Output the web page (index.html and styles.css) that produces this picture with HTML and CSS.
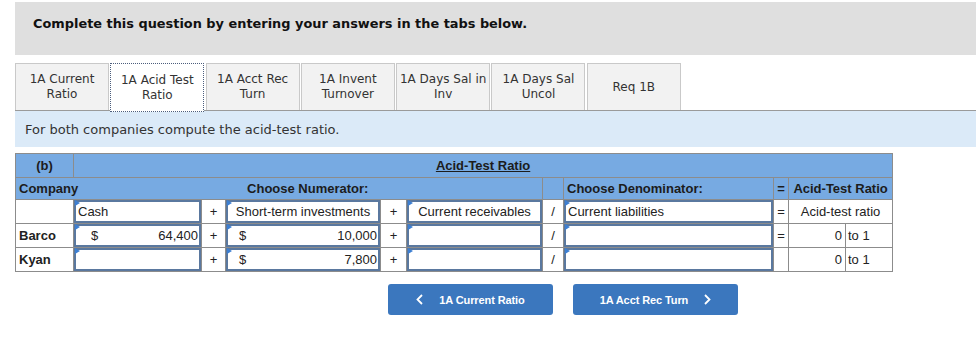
FILE: index.html
```html
<!DOCTYPE html>
<html>
<head>
<meta charset="utf-8">
<link rel="stylesheet" href="styles.css">
</head>
<body>
<div class="banner">Complete this question by entering your answers in the tabs below.</div>

<div class="tabs">
  <div class="tab">1A Current<br>Ratio</div>
  <div class="tab active">1A Acid Test<br>Ratio</div>
  <div class="tab">1A Acct Rec<br>Turn</div>
  <div class="tab">1A Invent<br>Turnover</div>
  <div class="tab">1A Days Sal in<br>Inv</div>
  <div class="tab">1A Days Sal<br>Uncol</div>
  <div class="tab">Req 1B</div>
</div>

<div class="instr">For both companies compute the acid-test ratio.</div>

<table class="grid">
  <colgroup>
    <col class="c-co"><col class="c-cash"><col class="c-op1"><col class="c-sti"><col class="c-op2"><col class="c-rec"><col class="c-div"><col class="c-den"><col class="c-eq"><col class="c-val"><col class="c-unit">
  </colgroup>
  <tr class="hdr h1">
    <td class="center b">(b)</td>
    <td colspan="10" class="center b"><span class="ul">Acid-Test Ratio</span></td>
  </tr>
  <tr class="hdr h2">
    <td class="b co-h">Company</td>
    <td colspan="5" class="center b num-h">Choose Numerator:</td>
    <td></td>
    <td class="b">Choose Denominator:</td>
    <td class="center b">=</td>
    <td colspan="2" class="center b">Acid-Test Ratio</td>
  </tr>
  <tr class="row">
    <td></td>
    <td class="inp"><div class="box left">Cash</div></td>
    <td class="center">+</td>
    <td class="inp"><div class="box centered">Short-term investments</div></td>
    <td class="center">+</td>
    <td class="inp"><div class="box centered">Current receivables</div></td>
    <td class="center">/</td>
    <td class="inp"><div class="box left">Current liabilities</div></td>
    <td class="center">=</td>
    <td colspan="2" class="center">Acid-test ratio</td>
  </tr>
  <tr class="row">
    <td class="b lbl">Barco</td>
    <td class="inp"><div class="box money"><span class="cur">$</span><span>64,400</span></div></td>
    <td class="center">+</td>
    <td class="inp"><div class="box money m2"><span class="cur">$</span><span>10,000</span></div></td>
    <td class="center">+</td>
    <td class="inp"><div class="box"></div></td>
    <td class="center">/</td>
    <td class="inp"><div class="box"></div></td>
    <td class="center">=</td>
    <td class="right">0</td>
    <td class="unit">to 1</td>
  </tr>
  <tr class="row">
    <td class="b lbl">Kyan</td>
    <td class="inp"><div class="box"></div></td>
    <td class="center">+</td>
    <td class="inp"><div class="box money m2"><span class="cur">$</span><span>7,800</span></div></td>
    <td class="center">+</td>
    <td class="inp"><div class="box"></div></td>
    <td class="center">/</td>
    <td class="inp"><div class="box"></div></td>
    <td></td>
    <td class="right">0</td>
    <td class="unit">to 1</td>
  </tr>
</table>

<div class="nav">
  <div class="btn">
    <svg width="7" height="11" viewBox="0 0 7 11"><path d="M6 1 L1.5 5.5 L6 10" fill="none" stroke="#fff" stroke-width="1.8"/></svg>
    <span>1A Current Ratio</span>
  </div>
  <div class="btn">
    <span>1A Acct Rec Turn</span>
    <svg width="7" height="11" viewBox="0 0 7 11"><path d="M1 1 L5.5 5.5 L1 10" fill="none" stroke="#fff" stroke-width="1.8"/></svg>
  </div>
</div>
</body>
</html>
```

FILE: styles.css
```css
body {
  margin: 0;
  padding-top: 2px;
  background: #fff;
  font-family: "DejaVu Sans", Verdana, sans-serif;
  color: #222;
}

.banner {
  margin-left: 15px;
  height: 53px;
  background: #dfdfdf;
  padding-left: 18px;
  box-sizing: border-box;
  padding-top: 14px;
  font-size: 12.9px;
  font-weight: bold;
  color: #111;
}

.tabs {
  margin: 8px 0 0 15px;
  display: flex;
  gap: 1.3px;
  border-bottom: 1px solid #9a9a9a;
  height: 47px;
}

.tab {
  width: 94px;
  box-sizing: border-box;
  height: 47px;
  background: #f2f2f2;
  border: 1px solid #c9c9c9;
  border-bottom: none;
  display: flex;
  align-items: center;
  justify-content: center;
  text-align: center;
  font-size: 12px;
  line-height: 15px;
  color: #333;
}

.tab.active {
  background: #fff;
  border: 1px dotted #4b5d7c;
  height: 49px;
  position: relative;
  z-index: 1;
}

.instr {
  margin-left: 15px;
  height: 36px;
  background: #dbeaf8;
  padding-left: 10px;
  box-sizing: border-box;
  padding-top: 11px;
  font-size: 13px;
  color: #333;
}

.grid {
  margin: 6px 0 0 15px;
  border-collapse: collapse;
  table-layout: fixed;
  width: 877px;
  font-family: "Liberation Sans", Arial, sans-serif;
  font-size: 13px;
  color: #222;
}

.c-co { width: 58px; }
.c-cash { width: 128px; }
.c-op1 { width: 24px; }
.c-sti { width: 155px; }
.c-op2 { width: 26px; }
.c-rec { width: 136px; }
.c-div { width: 21px; }
.c-den { width: 210px; }
.c-eq { width: 15px; }
.c-val { width: 57px; }
.c-unit { width: 47px; }

.grid td {
  border: 1px solid #8c8c8c;
  padding: 0 3px;
  white-space: nowrap;
  overflow: visible;
}

.hdr td {
  background: #77aae2;
  color: #1c1c1c;
}

.h1 td { height: 23px; }
.h2 td { height: 21px; }
.row td { height: 23px; padding-top: 0; padding-bottom: 0; }

.grid .co-h { border-right: none; }
.grid .num-h { border-left: none; }

.b { font-weight: bold; }
.center { text-align: center; }
.right { text-align: right; }
.grid td.unit { padding-left: 2px; }
.ul { text-decoration: underline; }

.grid td.inp {
  padding: 0;
  vertical-align: top;
}

.box {
  position: relative;
  box-sizing: border-box;
  height: 23px;
  border: 2px solid #5a789f;
  line-height: 19px;
  padding: 0 3px;
}

.box::before {
  content: "";
  position: absolute;
  left: -1px;
  top: -2px;
  border-left: 5px solid #3d7fd2;
  border-top: 3.5px solid transparent;
  border-bottom: 3.5px solid transparent;
}

.box.left { padding-left: 2px; }
.box.centered { text-align: center; }

.box.money {
  display: flex;
  justify-content: space-between;
  padding-left: 15px;
  padding-right: 1px;
}

.box.money.m2 { padding-left: 11px; }

.nav {
  margin: 12px 0 0 388px;
  display: flex;
  gap: 20px;
}

.btn {
  width: 165px;
  height: 31px;
  box-sizing: border-box;
  background: #3b77be;
  border-radius: 3px;
  display: flex;
  align-items: center;
  justify-content: center;
  gap: 16px;
  color: #fff;
  font-family: "Liberation Sans", Arial, sans-serif;
  font-weight: bold;
  font-size: 11px;
  letter-spacing: -0.1px;
}
```
